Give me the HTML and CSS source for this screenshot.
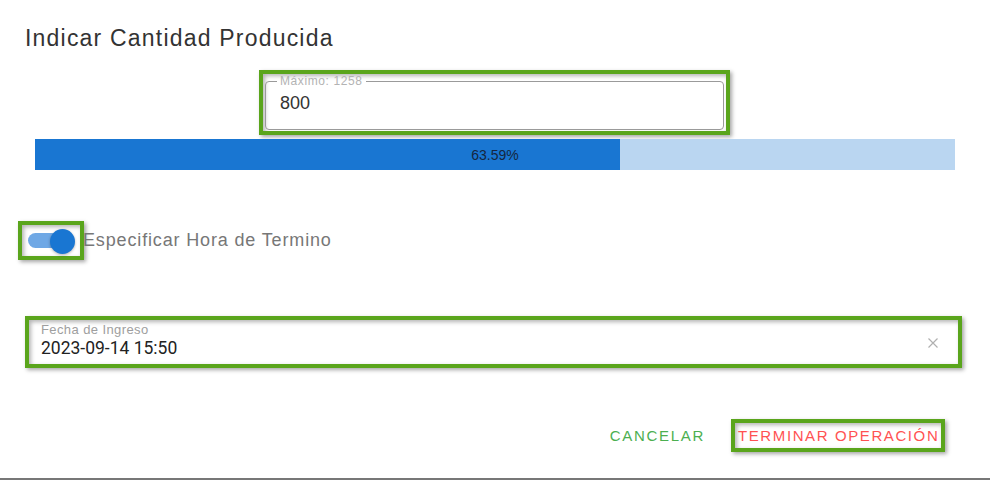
FILE: index.html
```html
<!DOCTYPE html>
<html lang="es">
<head>
<meta charset="utf-8">
<title>Indicar Cantidad Producida</title>
<link rel="stylesheet" href="styles.css">
</head>
<body>
<div class="dialog">
  <h1 class="title">Indicar Cantidad Producida</h1>

  <div class="hl max-wrap">
    <fieldset class="outlined">
      <legend>Máximo: 1258</legend>
      <div class="value">800</div>
    </fieldset>
  </div>

  <div class="progress">
    <div class="progress-fill" style="width:63.59%"></div>
    <span class="progress-text">63.59%</span>
  </div>

  <div class="switch-row">
    <div class="hl switch-box">
      <div class="switch">
        <span class="track"></span>
        <span class="thumb"></span>
      </div>
    </div>
    <span class="switch-label">Especificar Hora de Termino</span>
  </div>

  <div class="hl date-box">
    <div class="date-fields">
      <div class="date-label">Fecha de Ingreso</div>
      <div class="date-value">2023-09-14 15:50</div>
    </div>
    <svg class="clear" width="10" height="10" viewBox="0 0 10 10"><path d="M0.5 0.5 L9.5 9.5 M9.5 0.5 L0.5 9.5" stroke="#b0b0b0" stroke-width="1.2" fill="none"/></svg>
  </div>

  <div class="actions">
    <button class="btn cancel">CANCELAR</button>
    <div class="hl finish-box"><button class="btn finish">TERMINAR OPERACIÓN</button></div>
  </div>

  <div class="bottom-line"></div>
</div>
</body>
</html>
```

FILE: styles.css
```css
* { box-sizing: border-box; }
html, body { margin: 0; padding: 0; background: #fff; }
body { font-family: "Liberation Sans", Arial, sans-serif; width: 992px; height: 481px; overflow: hidden; }

.dialog { display: flex; flex-direction: column; }

.title {
  margin: 22px 0 0 25px;
  font-size: 23px;
  font-weight: 400;
  line-height: 32px;
  letter-spacing: 1.2px;
  color: #333;
}

.hl {
  border: 4px solid #5aa51c;
  box-shadow: 2px 2px 4px rgba(0,0,0,0.35), inset 2px 2px 4px rgba(0,0,0,0.3);
  background: #fff;
}

.max-wrap {
  margin: 16px 0 0 259px;
  width: 471px;
  height: 65px;
  padding: 0 2px 2px 2px;
}

.outlined {
  margin: 0;
  height: 56px;
  border: 1px solid #9a9a9a;
  border-radius: 4px;
  padding: 0 14px;
}
.outlined legend {
  font-size: 12px;
  line-height: 14px;
  color: #b3b3b3;
  padding: 0 3px;
  margin-left: -3px;
  letter-spacing: 0.6px;
}
.outlined .value {
  font-size: 18px;
  line-height: 22px;
  color: #333;
  margin-top: 4px;
}

.progress {
  position: relative;
  margin: 4px 0 0 35px;
  width: 920px;
  height: 31px;
  background: #bad6f1;
  display: flex;
  align-items: center;
  justify-content: center;
}
.progress-fill {
  position: absolute;
  left: 0; top: 0; bottom: 0;
  background: #1976d2;
}
.progress-text {
  position: relative;
  font-size: 14px;
  color: #15273f;
}

.switch-row {
  display: flex;
  align-items: center;
  margin: 51px 0 0 18px;
}
.switch-box {
  width: 66px;
  height: 39px;
  display: flex;
  align-items: center;
  padding-left: 6px;
}
.switch { position: relative; width: 48px; height: 26px; display: flex; align-items: center; }
.track {
  width: 42px;
  height: 15px;
  border-radius: 8px;
  background: #6fa8e5;
}
.thumb {
  position: absolute;
  left: 22px;
  top: 1px;
  width: 25px;
  height: 25px;
  border-radius: 50%;
  background: #1976d2;
  box-shadow: 0 1px 3px rgba(0,0,0,0.3);
}
.switch-label {
  font-size: 18px;
  letter-spacing: 0.85px;
  color: #777;
  margin-left: -1px;
}

.date-box {
  margin: 56px 0 0 25px;
  width: 937px;
  height: 52px;
  display: flex;
  align-items: center;
  padding: 0 20px 0 12px;
}
.date-fields { flex: 1; display: flex; flex-direction: column; }
.date-label {
  font-size: 13px;
  line-height: 14px;
  color: #9e9e9e;
  margin-top: -3px;
  letter-spacing: 0.4px;
}
.date-value {
  font-family: Roboto, "Liberation Sans", sans-serif;
  font-size: 17.5px;
  line-height: 22px;
  color: #222;
}
.clear { flex: none; margin-top: 1px; }

.actions {
  display: flex;
  justify-content: flex-end;
  align-items: center;
  margin: 51px 47px 0 0;
}
.btn {
  border: 0;
  background: none;
  padding: 0;
  font-family: "Liberation Sans", Arial, sans-serif;
  font-size: 15px;
  letter-spacing: 1.7px;
  white-space: nowrap;
  cursor: pointer;
}
.cancel { color: #4caf50; margin-right: 26px; }
.finish-box {
  width: 214px;
  height: 33px;
  display: flex;
  align-items: center;
  padding-left: 3px;
}
.finish { color: #ff5252; letter-spacing: 1.6px; }

.bottom-line {
  margin-top: 26px;
  height: 2px;
  width: 990px;
  background: #777;
}
```
